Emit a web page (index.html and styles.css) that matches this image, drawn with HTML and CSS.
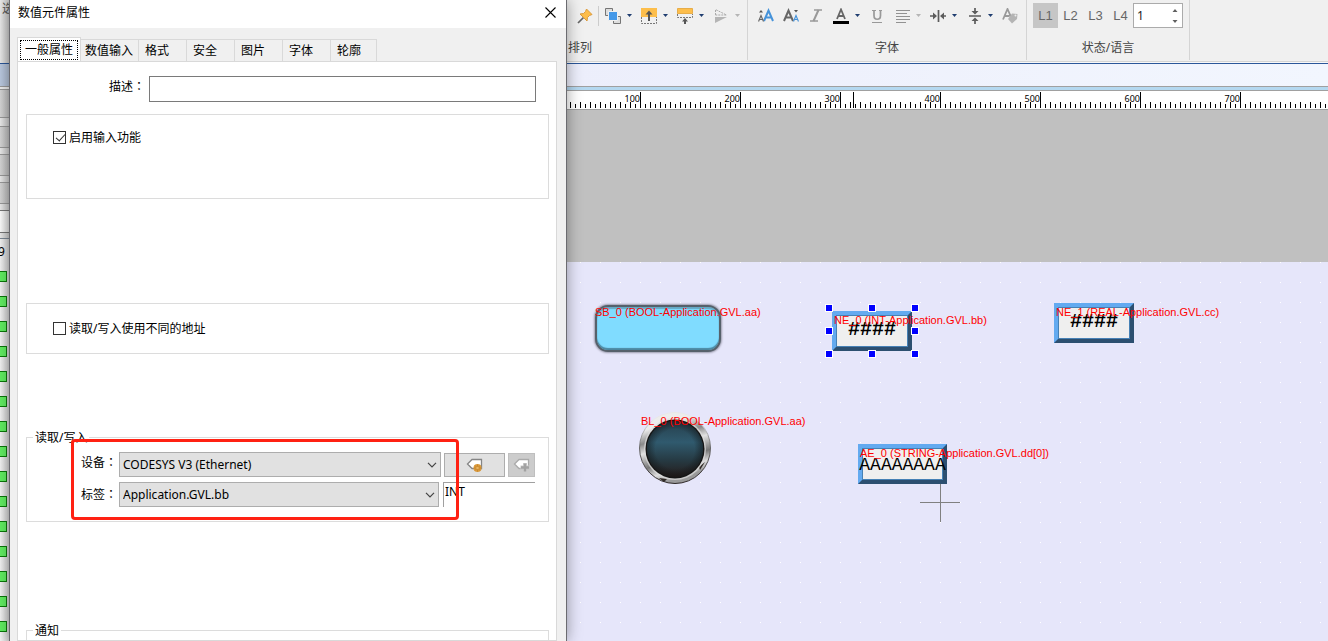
FILE: index.html
```html
<!DOCTYPE html>
<html lang="zh-CN">
<head>
<meta charset="utf-8">
<title>数值元件属性</title>
<link rel="stylesheet" href="styles.css">
</head>
<body>
<div class="app">
  <aside class="strip">
    <div class="strip-ribbon">选</div>
    <div class="strip-blue"></div>
    <div class="strip-gap"></div>
    <div class="strip-cell first"></div>
    <div class="strip-cell second"></div>
    <div class="strip-cell"></div>
    <div class="strip-cell"></div>
    <div class="strip-field"></div>
    <div class="strip-list">
      <span class="strip-number">9</span>
      <i class="led"></i><i class="led"></i><i class="led"></i><i class="led"></i><i class="led"></i>
      <i class="led"></i><i class="led"></i><i class="led"></i><i class="led"></i><i class="led"></i>
      <i class="led"></i><i class="led"></i><i class="led"></i><i class="led"></i><i class="led"></i>
    </div>
  </aside>

  <section class="dialog" role="dialog" aria-labelledby="dialog-title">
    <header class="title-bar">
      <h1 id="dialog-title">数值元件属性</h1>
      <button class="close" type="button" aria-label="关闭"><svg width="11" height="11" viewBox="0 0 11 11"><path d="M.5.5l10 10M10.500.5l-10 10" stroke="#000" stroke-width="1.100"/></svg></button>
    </header>
    <div class="tabs" role="tablist">
      <button class="tab active" role="tab" type="button" aria-selected="true"><span>一般属性</span></button>
      <button class="tab wide" role="tab" type="button">数值输入</button>
      <button class="tab" role="tab" type="button">格式</button>
      <button class="tab" role="tab" type="button">安全</button>
      <button class="tab" role="tab" type="button">图片</button>
      <button class="tab" role="tab" type="button">字体</button>
      <button class="tab last" role="tab" type="button">轮廓</button>
    </div>
    <form class="panel">
      <div class="describe">
        <label for="desc">描述<span class="colon" lang="zh-TW">：</span></label>
        <input id="desc" type="text">
      </div>
      <div class="box enable">
        <label class="check"><input type="checkbox" checked>启用输入功能</label>
      </div>
      <div class="box address">
        <label class="check"><input type="checkbox">读取/写入使用不同的地址</label>
      </div>
      <fieldset class="rw">
        <legend>读取/写入</legend>
        <div class="row">
          <label for="device">设备<span class="colon" lang="zh-TW">：</span></label>
          <div class="combo device">
            <select id="device"><option>CODESYS V3 (Ethernet)</option></select>
            <svg width="10" height="6" viewBox="0 0 10 6"><path d="M1 .8l4 4 4-4" fill="none" stroke="#444" stroke-width="1.200"/></svg>
          </div>
          <button class="tag-button" type="button" aria-label="标签设置">
            <svg width="17" height="16" viewBox="0 0 17 16"><path d="M6 2.500h9.500v9H6L1.500 7z" fill="#fff" stroke="#858585" stroke-width="1.300"/><circle cx="11.500" cy="11" r="4" fill="#dc9b3c"/><path d="M8 11h7M11.500 7.500v7M9 8.500l5 5M14 8.500l-5 5" stroke="#b97c29" stroke-width=".7"/><circle cx="11.500" cy="11" r="1.300" fill="#e9b35e"/></svg>
          </button>
          <button class="tag-add" type="button" aria-label="新增标签" disabled>
            <svg width="17" height="16" viewBox="0 0 17 16"><path d="M6 2.500h9.500v9H6L1.500 7z" fill="#fff" stroke="#aaa" stroke-width="1.300"/><path d="M12 6v9M7.500 10.500h9" stroke="#ccc" stroke-width="4"/><path d="M12 6.500v8M8 10.500h8" stroke="#a2a2a2" stroke-width="2.400"/></svg>
          </button>
        </div>
        <div class="row second">
          <label for="tag">标签<span class="colon" lang="zh-TW">：</span></label>
          <div class="combo tag">
            <select id="tag"><option>Application.GVL.bb</option></select>
            <svg width="10" height="6" viewBox="0 0 10 6"><path d="M1 .8l4 4 4-4" fill="none" stroke="#444" stroke-width="1.200"/></svg>
          </div>
          <output class="type">INT</output>
        </div>
        <div class="highlight"></div>
      </fieldset>
      <fieldset class="notify"><legend>通知</legend></fieldset>
    </form>
  </section>

  <main class="workspace">
    <div class="ribbon">
      <div class="group arrange">
        <div class="tools">
          <button type="button" aria-label="固定"><svg width="16" height="16" viewBox="0 0 16 16"><path d="M6.500 9.500L1 15" stroke="#666" stroke-width="1.700"/><path d="M9.500 1L15 6.500 12.500 7.500 10.500 9.500 10 13 3 6 6.500 5.500 8.500 3.500z" fill="#fdbd4a" stroke="#dc9b3c"/></svg></button>
          <span class="divider"></span>
          <button type="button" aria-label="层次"><svg width="16" height="16" viewBox="0 0 16 16"><path d="M.5.5h7v7h-7zM8.500 8.500h7v7h-7z" fill="#ddd" stroke="#757575"/><path d="M3.500 3.500h9v9h-9z" fill="#4498e8" stroke="#f0f0f0"/></svg><i class="caret"></i></button>
          <button type="button" aria-label="上移"><svg width="16" height="16" viewBox="0 0 16 16"><path d="M0 0h16v9H0z" fill="#fdbe4b"/><path d="M.5 9v6.500h15V9" fill="none" stroke="#777" stroke-dasharray="2 1"/><path d="M8 13V4" stroke="#555" stroke-width="2"/><path d="M4.500 6.500L8 2.500l3.500 4z" fill="#555"/></svg><i class="caret"></i></button>
          <button type="button" aria-label="下移"><svg width="16" height="16" viewBox="0 0 16 16"><path d="M.5.5h15v5H.5z" fill="#fdbe4b" stroke="#e7ad49"/><path d="M.5 6v3.500h15V6" fill="none" stroke="#777" stroke-dasharray="2 1"/><path d="M8 11v5" stroke="#555" stroke-width="2"/><path d="M5 13.500l3-3.500 3 3.500z" fill="#555"/></svg><i class="caret"></i></button>
          <button type="button" aria-label="翻转" disabled><svg width="16" height="16" viewBox="0 0 16 16"><path d="M2 15V9h12z" fill="#b5b5b5"/><path d="M2.500 7V1.500L13.500 7z" fill="none" stroke="#aaa" stroke-dasharray="2 1"/></svg><i class="caret"></i></button>
        </div>
        <div class="caption">排列</div>
      </div>
      <div class="group font">
        <div class="tools">
          <button type="button" aria-label="放大字体"><svg width="16" height="16" viewBox="0 0 16 16"><path d="M6 13L10.500 2.500 15 13M7.500 9.500h6" fill="none" stroke="#4693da" stroke-width="2"/><path d="M.5 13.500L3 7.500l2.500 6M1.500 11.500h3" fill="none" stroke="#666" stroke-width="1.200"/><path d="M1 4.500L3 2l2 2.500z" fill="#555"/></svg></button>
          <button type="button" aria-label="缩小字体"><svg width="16" height="16" viewBox="0 0 16 16"><path d="M1 13L5.500 2.500 10 13M2.500 9.500h6" fill="none" stroke="#666" stroke-width="2"/><path d="M10.500 13.500L13 7.500l2.500 6M11.500 11.500h3" fill="none" stroke="#4693da" stroke-width="1.200"/><path d="M11 2l2 2.500L15 2z" fill="#555"/></svg></button>
          <button type="button" aria-label="斜体" disabled><svg width="16" height="16" viewBox="0 0 16 16"><path d="M6 2h8M2 13h8" stroke="#999" stroke-width="1.300"/><path d="M10.500 2l-5 11" stroke="#999" stroke-width="2"/></svg></button>
          <button type="button" aria-label="字体颜色"><svg width="16" height="16" viewBox="0 0 16 16"><path d="M4 11L8 1.500 12 11M5.500 8h5" fill="none" stroke="#666" stroke-width="1.800"/><path d="M0 13h16v3H0z"/></svg><i class="caret"></i></button>
          <button type="button" aria-label="下划线" disabled><svg width="16" height="16" viewBox="0 0 16 16"><path d="M3 2.500h4M10 2.500h3M3 14.500h10" stroke="#999" stroke-width="1.100"/><path d="M5 2.500v5c0 5 6.500 5 6.500 0v-5" fill="none" stroke="#999" stroke-width="1.700"/></svg></button>
          <button type="button" aria-label="对齐" disabled><svg width="16" height="16" viewBox="0 0 16 16"><path d="M2 2.500h14M2 5.500h11M2 8.500h14M2 11.500h14M2 14.500h10" stroke="#929292"/></svg><i class="caret"></i></button>
          <button type="button" aria-label="水平居中"><svg width="16" height="16" viewBox="0 0 16 16"><path d="M8.500 2v12M0 8h5M12 8h5" stroke="#5c5c5c" stroke-width="1.700"/><path d="M3 4.500L7 8l-4 3.500zM14 4.500L10 8l4 3.500z" fill="#5c5c5c"/></svg><i class="caret"></i></button>
          <button type="button" aria-label="垂直居中"><svg width="16" height="16" viewBox="0 0 16 16"><path d="M3 8h12M9 0v4M9 12v4" stroke="#5c5c5c" stroke-width="1.700"/><path d="M5.500 3L9 6.500 12.500 3zM5.500 13L9 9.500l3.500 3.500z" fill="#5c5c5c"/></svg><i class="caret"></i></button>
          <button type="button" aria-label="文字标签" disabled><svg width="16" height="16" viewBox="0 0 16 16"><path d="M1 11.500L5.500 1 9 9M2.500 8h5" fill="none" stroke="#999" stroke-width="1.800"/><path d="M10 5.500l5.500.5-.5 5-5 4.500-4-4.500z" fill="#b4b4b4"/><circle cx="13.500" cy="7.500" r="1" fill="#eee"/></svg></button>
        </div>
        <div class="caption">字体</div>
      </div>
      <div class="group state">
        <div class="tools">
          <button class="lang on" type="button">L1</button>
          <button class="lang" type="button">L2</button>
          <button class="lang" type="button">L3</button>
          <button class="lang" type="button">L4</button>
          <div class="spin">
            <input type="number" value="1" aria-label="状态">
            <svg width="6" height="16" viewBox="0 0 6 16"><path d="M.5 4L3 1l2.500 3zM.5 12L3 15l2.500-3z" fill="#606060"/></svg>
          </div>
        </div>
        <div class="caption">状态/语言</div>
      </div>
    </div>
    <div class="doc-bar"></div>
    <div class="blue-bar"></div>
    <div class="ruler">
      <span>100</span><span>200</span><span>300</span><span>400</span><span>500</span><span>600</span><span>700</span>
      <i class="pointer"></i>
    </div>
    <div class="margin-area"></div>
    <div class="canvas">
      <div class="part bool-set"></div>
      <div class="part numeric ne0">####
        <div class="handles"><i></i><i></i><i></i><i></i><b></b><i></i><i></i><i></i><i></i></div>
      </div>
      <div class="part numeric ne1">####</div>
      <svg class="part lamp" width="74" height="74" viewBox="0 0 74 74">
        <defs>
          <linearGradient id="rim" x1="0" y1="0" x2=".3" y2="1"><stop offset="0" stop-color="#eee"/><stop offset=".25" stop-color="#ececec"/><stop offset=".42" stop-color="#8a8a8a"/><stop offset=".55" stop-color="#e2e2e2"/><stop offset=".75" stop-color="#777"/><stop offset=".88" stop-color="#ddd"/><stop offset="1" stop-color="#999"/></linearGradient>
          <linearGradient id="glass" x1="0" y1="0" x2="0" y2="1"><stop offset="0" stop-color="#263f4c"/><stop offset=".38" stop-color="#305a6e"/><stop offset=".7" stop-color="#263a43"/><stop offset="1" stop-color="#251d1c"/></linearGradient>
          <radialGradient id="shade"><stop offset=".7" stop-color="#111" stop-opacity="0"/><stop offset="1" stop-color="#111" stop-opacity=".5"/></radialGradient>
          <linearGradient id="edge" x1="0" y1="0" x2="0" y2="1"><stop offset=".1" stop-color="#e8e8e8"/><stop offset=".5" stop-color="#666"/><stop offset="1" stop-color="#2c2625"/></linearGradient>
        </defs>
        <circle cx="37" cy="37" r="35.500" fill="url(#rim)" stroke="url(#edge)"/>
        <path d="M61 56l6-5-5 8zM21 67l8 1-3 3z" fill="#302a27"/>
        <circle cx="37" cy="38" r="31" fill="#ddd" opacity=".7"/>
        <circle cx="37" cy="38" r="29.500" fill="#151515"/>
        <circle cx="37" cy="38" r="28" fill="url(#glass)"/>
        <circle cx="37" cy="38" r="28" fill="url(#shade)"/>
      </svg>
      <div class="part ascii">AAAAAAAA</div>
      <svg class="part cross" width="41" height="40" viewBox="0 0 41 40"><path d="M0 20.500h40M20.500 2v38" stroke="#808080"/></svg>
      <span class="note note-sb">SB_0 (BOOL-Application.GVL.aa)</span>
      <span class="note note-ne0">NE_0 (INT-Application.GVL.bb)</span>
      <span class="note note-ne1">NE_1 (REAL-Application.GVL.cc)</span>
      <span class="note note-bl">BL_0 (BOOL-Application.GVL.aa)</span>
      <span class="note note-ae">AE_0 (STRING-Application.GVL.dd[0])</span>
    </div>
  </main>
</div>
</body>
</html>
```
FILE: styles.css
```css
* { box-sizing: border-box; }
body {
  margin: 0;
  overflow: hidden;
  font: 12px/16px "Noto Sans", "Noto Sans CJK SC", sans-serif;
  color: #000;
}
button, input, select { font: inherit; color: inherit; margin: 0; border-radius: 0; }
button { padding: 0; border: 0; background: none; }
svg { display: block; flex: none; }
.app { display: flex; height: 100vh; overflow: hidden; background: #f0f0f0; }

/* Visible edge of the window behind the dialog */
.strip {
  flex: 0 0 9px;
  display: flex;
  flex-direction: column;
  overflow: hidden;
  background: linear-gradient(90deg, #ececec, #c9c9c9);
}
.strip-ribbon { flex: none; height: 64px; padding: 1px 0 0 2px; border-bottom: 1px solid #2b579a; color: #555; white-space: nowrap; }
.strip-blue { flex: none; height: 23px; border-bottom: 1px solid #999; background: linear-gradient(90deg, #bccbe2, #b0bed3); }
.strip-gap { flex: none; height: 3px; border-bottom: 1px solid #999; background: #eee; }
.strip-cell { flex: none; height: 22px; margin-top: 6px; border: solid #999; border-width: 1px 0; background: linear-gradient(90deg, #d8d8d8, #bdbdbd); }
.strip-cell.first { margin-top: 0; height: 28px; border-top: 0; }
.strip-cell.second { margin-top: 8px; }
.strip-field { flex: none; height: 23px; margin-top: 6px; border: 1px solid #777; border-width: 1px 0; background: linear-gradient(90deg, #fff, #ddd); }
.strip-list { flex: none; display: flex; flex-direction: column; margin-top: 5px; border-top: 1px solid #7b8794; background: linear-gradient(90deg, #f6f6f6, #d0d0d0); }
.strip-number { height: 32px; padding-top: 5px; margin-left: -2px; }
.led { flex: none; width: 7px; height: 11px; margin-bottom: 14px; border: 1px solid #0a7a0a; border-left: 0; background: #62f062; }

.dialog {
  position: relative;
  z-index: 1;
  flex: 0 0 558px;
  display: flex;
  flex-direction: column;
  border: solid #6b6b70;
  border-width: 0 1px;
  background: #f0f0f0;
  box-shadow: 0 0 14px rgba(0, 0, 0, .38);
}
.title-bar { flex: none; display: flex; justify-content: space-between; align-items: flex-start; height: 28px; padding: 5px 10px 0 8px; background: #fff; }
.title-bar h1 { margin: 0; font: inherit; }
.close { padding-top: 2px; }
.tabs { flex: none; display: flex; align-items: flex-end; height: 33px; padding-left: 7px; }
.tab { width: 48px; height: 22px; padding: 1px 0 0 6px; border: 1px solid #d9d9d9; border-width: 1px 1px 0 0; text-align: left; white-space: nowrap; }
.tab.wide { width: 58px; padding-left: 4px; }
.tab.last { width: 46px; }
.tab.active { width: 64px; height: 25px; margin-bottom: -1px; padding: 2px; border-left-width: 1px; background: #fff; }
.tab.active span { display: block; height: 20px; border: 1px dotted #000; padding-left: 4px; line-height: 17px; }
.panel { flex: 1 0 0; min-height: 0; margin: 0 9px 0 7px; padding: 14px 7px 0 8px; border: 1px solid #d9d9d9; background: #fff; overflow: hidden; }
.describe { display: flex; padding: 0 13px 0 83px; }
.describe label { flex: 0 0 40px; padding-top: 3px; white-space: nowrap; }
.colon { font-family: "Noto Sans CJK TC", sans-serif; line-height: 1; }
.describe input { flex: 1; min-width: 0; height: 26px; border: 1px solid #7a7a7a; background: #fff; }
.box { border: 1px solid #dcdcdc; padding: 15px 26px 0; }
.enable { height: 85px; margin-top: 12px; }
.address { height: 51px; margin-top: 104px; padding-top: 17px; }
.check { display: flex; align-items: flex-start; gap: 3px; width: max-content; }
.check input { appearance: none; position: relative; width: 13px; height: 13px; margin-top: 1px; border: 1px solid #333; background: #fff; }
.check input:checked::after { content: ""; position: absolute; left: 4px; top: 0; width: 4px; height: 8px; border: solid #333; border-width: 0 1px 1px 0; transform: rotate(42deg); }
fieldset { position: relative; min-width: 0; margin: 0; border: 1px solid #dcdcdc; }
legend { height: 14px; padding: 0 2px; line-height: 15px; }
.rw { height: 92px; margin-top: 76px; padding: 8px 13px 0 54px; }
.rw legend { margin-left: -48px; }
.notify { height: 92px; margin-top: 101px; padding: 0 6px; }
.row { display: flex; align-items: flex-start; height: 25px; margin-bottom: 5px; }
.row label { flex: 0 0 38px; padding-top: 3px; white-space: nowrap; }
.row.second label { padding-top: 5px; }
.combo { display: grid; align-items: center; height: 25px; }
.combo.device { width: 322px; }
.combo.tag { width: 320px; }
.combo select { grid-area: 1 / 1; width: 100%; height: 25px; padding: 0 20px 0 3px; appearance: none; border: 1px solid #adadad; background: #e1e1e1; }
.combo svg { grid-area: 1 / 1; justify-self: end; margin-right: 4px; pointer-events: none; }
.tag-button, .tag-add { display: grid; place-items: center; height: 24px; margin-top: 1px; border: 1px solid #adadad; background: #e1e1e1; }
.tag-button { width: 61px; margin-left: 3px; }
.tag-add { width: 27px; margin-left: 3px; background: #ccc; border-color: #bfbfbf; }
.type { flex: 1; height: 25px; margin-left: 4px; padding: 1px; border: solid #a0a0a0; border-width: 1px 0 0 1px; }
.highlight { position: absolute; left: 44px; top: -5px; width: 388px; height: 81px; border: 3px solid #ff2113; border-radius: 4px; pointer-events: none; }

.workspace { flex: 1; min-width: 0; display: flex; flex-direction: column; }
.ribbon { flex: none; display: flex; height: 64px; border-bottom: 1px solid #2b579a; box-shadow: inset 0 -1px #f8f8f8, inset 0 -2px #d4d4d4; }
.group { flex: none; height: 60px; border-right: 1px solid #d4d4d4; color: #444; }
.tools { display: flex; align-items: center; gap: 9px; height: 31px; padding-left: 10px; }
.tools button { display: flex; align-items: center; gap: 6px; }
.arrange { width: 181px; }
.font { width: 279px; text-align: center; }
.state { width: 163px; text-align: center; }
.divider { width: 1px; height: 20px; margin: 0 -3px 0 -4px; background: #ccc; }
.caret { width: 5px; height: 3px; background: #1f3d70; clip-path: polygon(0 0, 100% 0, 50% 100%); }
button:disabled .caret { background: #b5b5b5; }
.caption { padding: 9px 1px 0; }
.state .tools { gap: 0; padding-left: 6px; }
.tools .lang { justify-content: center; width: 25px; height: 25px; font: 13px/25px "Liberation Sans", Arial, sans-serif; color: #666; }
.tools .lang.on { background: #c6c6c6; }
.spin { display: grid; align-items: center; width: 50px; }
.spin input { grid-area: 1 / 1; width: 50px; height: 25px; padding: 0 3px; border: 1px solid #ababab; background: #fff; color: #222; appearance: textfield; }
.spin input::-webkit-inner-spin-button { appearance: none; }
.spin svg { grid-area: 1 / 1; justify-self: end; margin-right: 5px; }
.doc-bar { flex: none; height: 22px; background: linear-gradient(90deg, #eceefb, #f2f6fe); }
.blue-bar { flex: none; height: 5px; border: solid #a0a0a0; border-width: 1px 0; background: #b4d8f0; }
.ruler {
  position: relative;
  flex: none;
  display: flex;
  height: 19px;
  padding-top: 1px;
  border-bottom: 1px solid #a0a0a0;
  overflow: hidden;
  font: 9px/14px "Noto Sans", sans-serif;
  background:
    repeating-linear-gradient(90deg, transparent 0 3px, #000 3px 4px, transparent 4px 10px) 0 11px / 100% 6px no-repeat,
    repeating-linear-gradient(90deg, transparent 0 8px, #000 8px 9px, transparent 9px 10px) 0 13px / 100% 4px no-repeat,
    #fff;
}
.ruler span { flex: 0 0 100px; height: 16px; border-right: 1px solid #000; text-align: right; }
.ruler span:first-child { flex-basis: 74px; }
.pointer { position: absolute; left: 286px; top: 1px; width: 1px; height: 16px; background: #000; }
.margin-area { flex: none; height: 152px; background: #c0c0c0; }
.canvas {
  position: relative;
  flex: 1;
  overflow: hidden;
  background:
    linear-gradient(90deg, transparent 0 1px, #e6e6fa 1px) 13px 0 / 20px 20px,
    linear-gradient(transparent 0 1px, #e6e6fa 1px) 13px 0 / 20px 20px,
    #fff;
}
.part { position: absolute; }
.bool-set {
  left: 28px; top: 43px; width: 126px; height: 47px;
  border: 2px solid #56616b;
  border-radius: 13px;
  background: #80dcff;
  box-shadow: inset 0 2px 1px #65a9c5, inset 0 -2px 1px #4b87a1, 0 0 2px 1px #9b9bad;
}
.numeric, .ascii {
  height: 40px;
  border: 4px solid;
  border-color: #63aaf0 #2c4f70 #2c4f70 #63aaf0;
  background: #efefef;
  box-shadow: inset 0 0 0 1px #4681b5;
  text-align: center;
  white-space: nowrap;
}
.numeric { width: 80px; font: bold 20px/30px "Liberation Mono", monospace; }
.ne0 { left: 265px; top: 49px; }
.ne1 { left: 487px; top: 41px; }
.handles { position: absolute; left: -10px; top: -10px; display: grid; grid-template-columns: repeat(3, 6px); justify-content: space-between; align-content: space-between; width: 92px; height: 52px; }
.handles i { width: 6px; height: 6px; background: #00f; box-shadow: 0 0 0 1px #fff; }
.lamp { left: 71px; top: 149px; }
.ascii { left: 291px; top: 182px; display: flex; justify-content: center; width: 89px; font: 18px/34px "Liberation Mono", monospace; }
.cross { left: 353px; top: 220px; }
.note { position: absolute; font: 11px/14px "Liberation Sans", Arial, sans-serif; color: #f00; white-space: nowrap; }
.note-sb { left: 28px; top: 43px; }
.note-ne0 { left: 267px; top: 51px; }
.note-ne1 { left: 489px; top: 43px; }
.note-bl { left: 74px; top: 152px; }
.note-ae { left: 293px; top: 184px; }
```
